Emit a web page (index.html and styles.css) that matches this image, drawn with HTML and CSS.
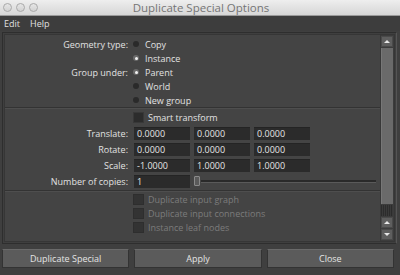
FILE: index.html
```html
<!DOCTYPE html>
<html lang="en">
<head>
  <meta charset="UTF-8" />
  <title>Duplicate Special Options</title>
  <link rel="stylesheet" href="styles.css">
</head>
<body>
  <div class="window">
    <div class="titlebar">
      <div class="lights"><span></span><span></span><span></span></div>
      <div class="title">Duplicate Special Options</div>
    </div>
    <div class="menubar">
      <span>Edit</span>
      <span>Help</span>
    </div>

    <div class="frame">
      <div class="scroll">
        <div class="content">
          <div class="section first">
            <div class="row">
              <label class="lbl">Geometry type:</label>
              <div class="opt"><i class="radio"></i>Copy</div>
            </div>
            <div class="row">
              <span class="lbl"></span>
              <div class="opt"><i class="radio on"></i>Instance</div>
            </div>
            <div class="row">
              <label class="lbl">Group under:</label>
              <div class="opt"><i class="radio on"></i>Parent</div>
            </div>
            <div class="row">
              <span class="lbl"></span>
              <div class="opt"><i class="radio"></i>World</div>
            </div>
            <div class="row">
              <span class="lbl"></span>
              <div class="opt"><i class="radio"></i>New group</div>
            </div>
          </div>

          <div class="section second">
            <div class="row short">
              <span class="lbl"></span>
              <div class="opt"><i class="check"></i>Smart transform</div>
            </div>
            <div class="row tall">
              <label class="lbl">Translate:</label>
              <div class="fields">
                <div class="field">0.0000</div>
                <div class="field">0.0000</div>
                <div class="field">0.0000</div>
              </div>
            </div>
            <div class="row tall">
              <label class="lbl">Rotate:</label>
              <div class="fields">
                <div class="field">0.0000</div>
                <div class="field">0.0000</div>
                <div class="field">0.0000</div>
              </div>
            </div>
            <div class="row tall">
              <label class="lbl">Scale:</label>
              <div class="fields">
                <div class="field">-1.0000</div>
                <div class="field">1.0000</div>
                <div class="field">1.0000</div>
              </div>
            </div>
            <div class="row tall">
              <label class="lbl">Number of copies:</label>
              <div class="fields">
                <div class="field">1</div>
                <div class="slider">
                  <i class="handle"></i>
                  <i class="track"></i>
                </div>
              </div>
            </div>
          </div>

          <div class="section third">
            <div class="row">
              <span class="lbl"></span>
              <div class="opt off"><i class="check"></i>Duplicate input graph</div>
            </div>
            <div class="row">
              <span class="lbl"></span>
              <div class="opt off"><i class="check"></i>Duplicate input connections</div>
            </div>
            <div class="row">
              <span class="lbl"></span>
              <div class="opt off"><i class="check"></i>Instance leaf nodes</div>
            </div>
          </div>
        </div>

        <div class="scrollbar">
          <div class="arrow up"></div>
          <div class="thumb"></div>
          <div class="grip"></div>
          <div class="arrow up"></div>
          <div class="arrow down"></div>
        </div>
      </div>
    </div>

    <div class="buttons">
      <button>Duplicate Special</button>
      <button>Apply</button>
      <button>Close</button>
    </div>
  </div>
</body>
</html>
```

FILE: styles.css
```css
body {
  margin: 0;
  font-family: 'Open Sans', 'Liberation Sans', sans-serif;
  font-size: 9px;
  background: #3f3f3f;
  color: #dcdcdc;
}
.window {
  width: 400px;
  height: 275px;
  overflow: hidden;
  background: #3f3f3f;
}
.titlebar {
  height: 15px;
  border-bottom: 1px solid #9a9a9a;
  background: linear-gradient(#eeeeee, #d6d6d6);
  display: flex;
  align-items: center;
}
.lights {
  display: flex;
  gap: 4px;
  padding-left: 3px;
}
.lights span {
  width: 7px;
  height: 7px;
  border-radius: 50%;
  border: 1px solid #a9a9a9;
  background: linear-gradient(#e6e6e6, #d2d2d2);
}
.title {
  flex: 1;
  text-align: center;
  font-size: 11.5px;
  color: #757575;
  margin-right: 36px;
}
.menubar {
  height: 15px;
  display: flex;
  align-items: center;
  gap: 10px;
  padding-left: 4px;
  background: #3d3d3d;
  color: #e0e0e0;
}
.frame {
  margin: 1px 3px 0 2px;
  height: 208px;
  border: 1px solid #2e2e2e;
  border-right-color: #555;
  padding: 1px;
}
.scroll {
  height: 206px;
  display: flex;
  border: 1px solid #363636;
  background: #444;
}
.content {
  flex: 1;
}
.section {
  border-bottom: 1px solid #333;
  box-shadow: 0 1px 0 #4e4e4e;
}
.first {
  padding: 2px 0 0;
}
.second {
  padding: 2px 0 1px;
}
.third {
  padding: 1px 0 0;
  border-bottom: none;
  box-shadow: none;
}
.row {
  display: grid;
  grid-template-columns: 123px 1fr;
  column-gap: 5px;
  align-items: center;
  height: 14px;
}
.row.short {
  height: 15px;
}
.row.tall {
  height: 16px;
}
.lbl {
  text-align: right;
  color: #e2e2e2;
}
.opt {
  display: flex;
  align-items: center;
  color: #e2e2e2;
}
.opt.off {
  color: #7c7c7c;
}
.radio {
  width: 6px;
  height: 6px;
  border-radius: 50%;
  background: #2a2a2a;
  margin: 0 6px 0 0;
  position: relative;
}
.radio.on {
  background: #6a6a6a;
}
.radio.on::after {
  content: '';
  position: absolute;
  left: 1.5px;
  top: 1.5px;
  width: 3px;
  height: 3px;
  border-radius: 50%;
  background: #f2f2f2;
}
.check {
  width: 9px;
  height: 9px;
  background: #2c2c2c;
  border: 1px solid #383838;
  margin-right: 4px;
}
.opt.off .check {
  background: #333;
  border-color: #2e2e2e;
}
.fields {
  display: flex;
  align-items: center;
  gap: 4px;
  padding-left: 1px;
}
.field {
  width: 53px;
  height: 12px;
  line-height: 12px;
  padding-left: 3px;
  background: #2b2b2b;
  border-top: 1px solid #242424;
  color: #e6e6e6;
}
.slider {
  flex: 1;
  display: flex;
  align-items: center;
  margin-right: 4px;
}
.handle {
  width: 4px;
  height: 8px;
  border: 1px solid #8a8a8a;
  background: #5a5a5a;
  border-radius: 1px;
}
.track {
  flex: 1;
  height: 2px;
  background: #2a2a2a;
  border-bottom: 1px solid #5a5a5a;
  margin-left: 1px;
}
.scrollbar {
  width: 12px;
  padding: 1px 1px 0 0;
  display: flex;
  flex-direction: column;
  gap: 1px;
  border-left: 1px solid #383838;
  background: #3c3c3c;
}
.arrow {
  height: 9px;
  background: #5e5e5e;
  border: 1px solid #4a4a4a;
  display: flex;
  align-items: center;
  justify-content: center;
}
.arrow::before {
  content: '';
  border-left: 3px solid transparent;
  border-right: 3px solid transparent;
}
.arrow.up::before {
  border-bottom: 3px solid #e8e8e8;
}
.arrow.down::before {
  border-top: 3px solid #e8e8e8;
}
.thumb {
  height: 156px;
  background: #6a6a6a;
  border-left: 1px solid #777;
}
.grip {
  height: 11px;
  background: repeating-linear-gradient(90deg, #2c2c2c 0 1px, #3a3a3a 1px 2px);
}
.buttons {
  display: flex;
  gap: 5px;
  padding: 5px 6px 0 2px;
}
button {
  flex: 1;
  height: 19px;
  font-family: 'Open Sans', 'Liberation Sans', sans-serif;
  font-size: 9px;
  color: #e4e4e4;
  background: #5b5b5b;
  border: 1px solid #333;
  border-top-color: #6a6a6a;
  border-radius: 1px;
  padding: 0;
}
```
